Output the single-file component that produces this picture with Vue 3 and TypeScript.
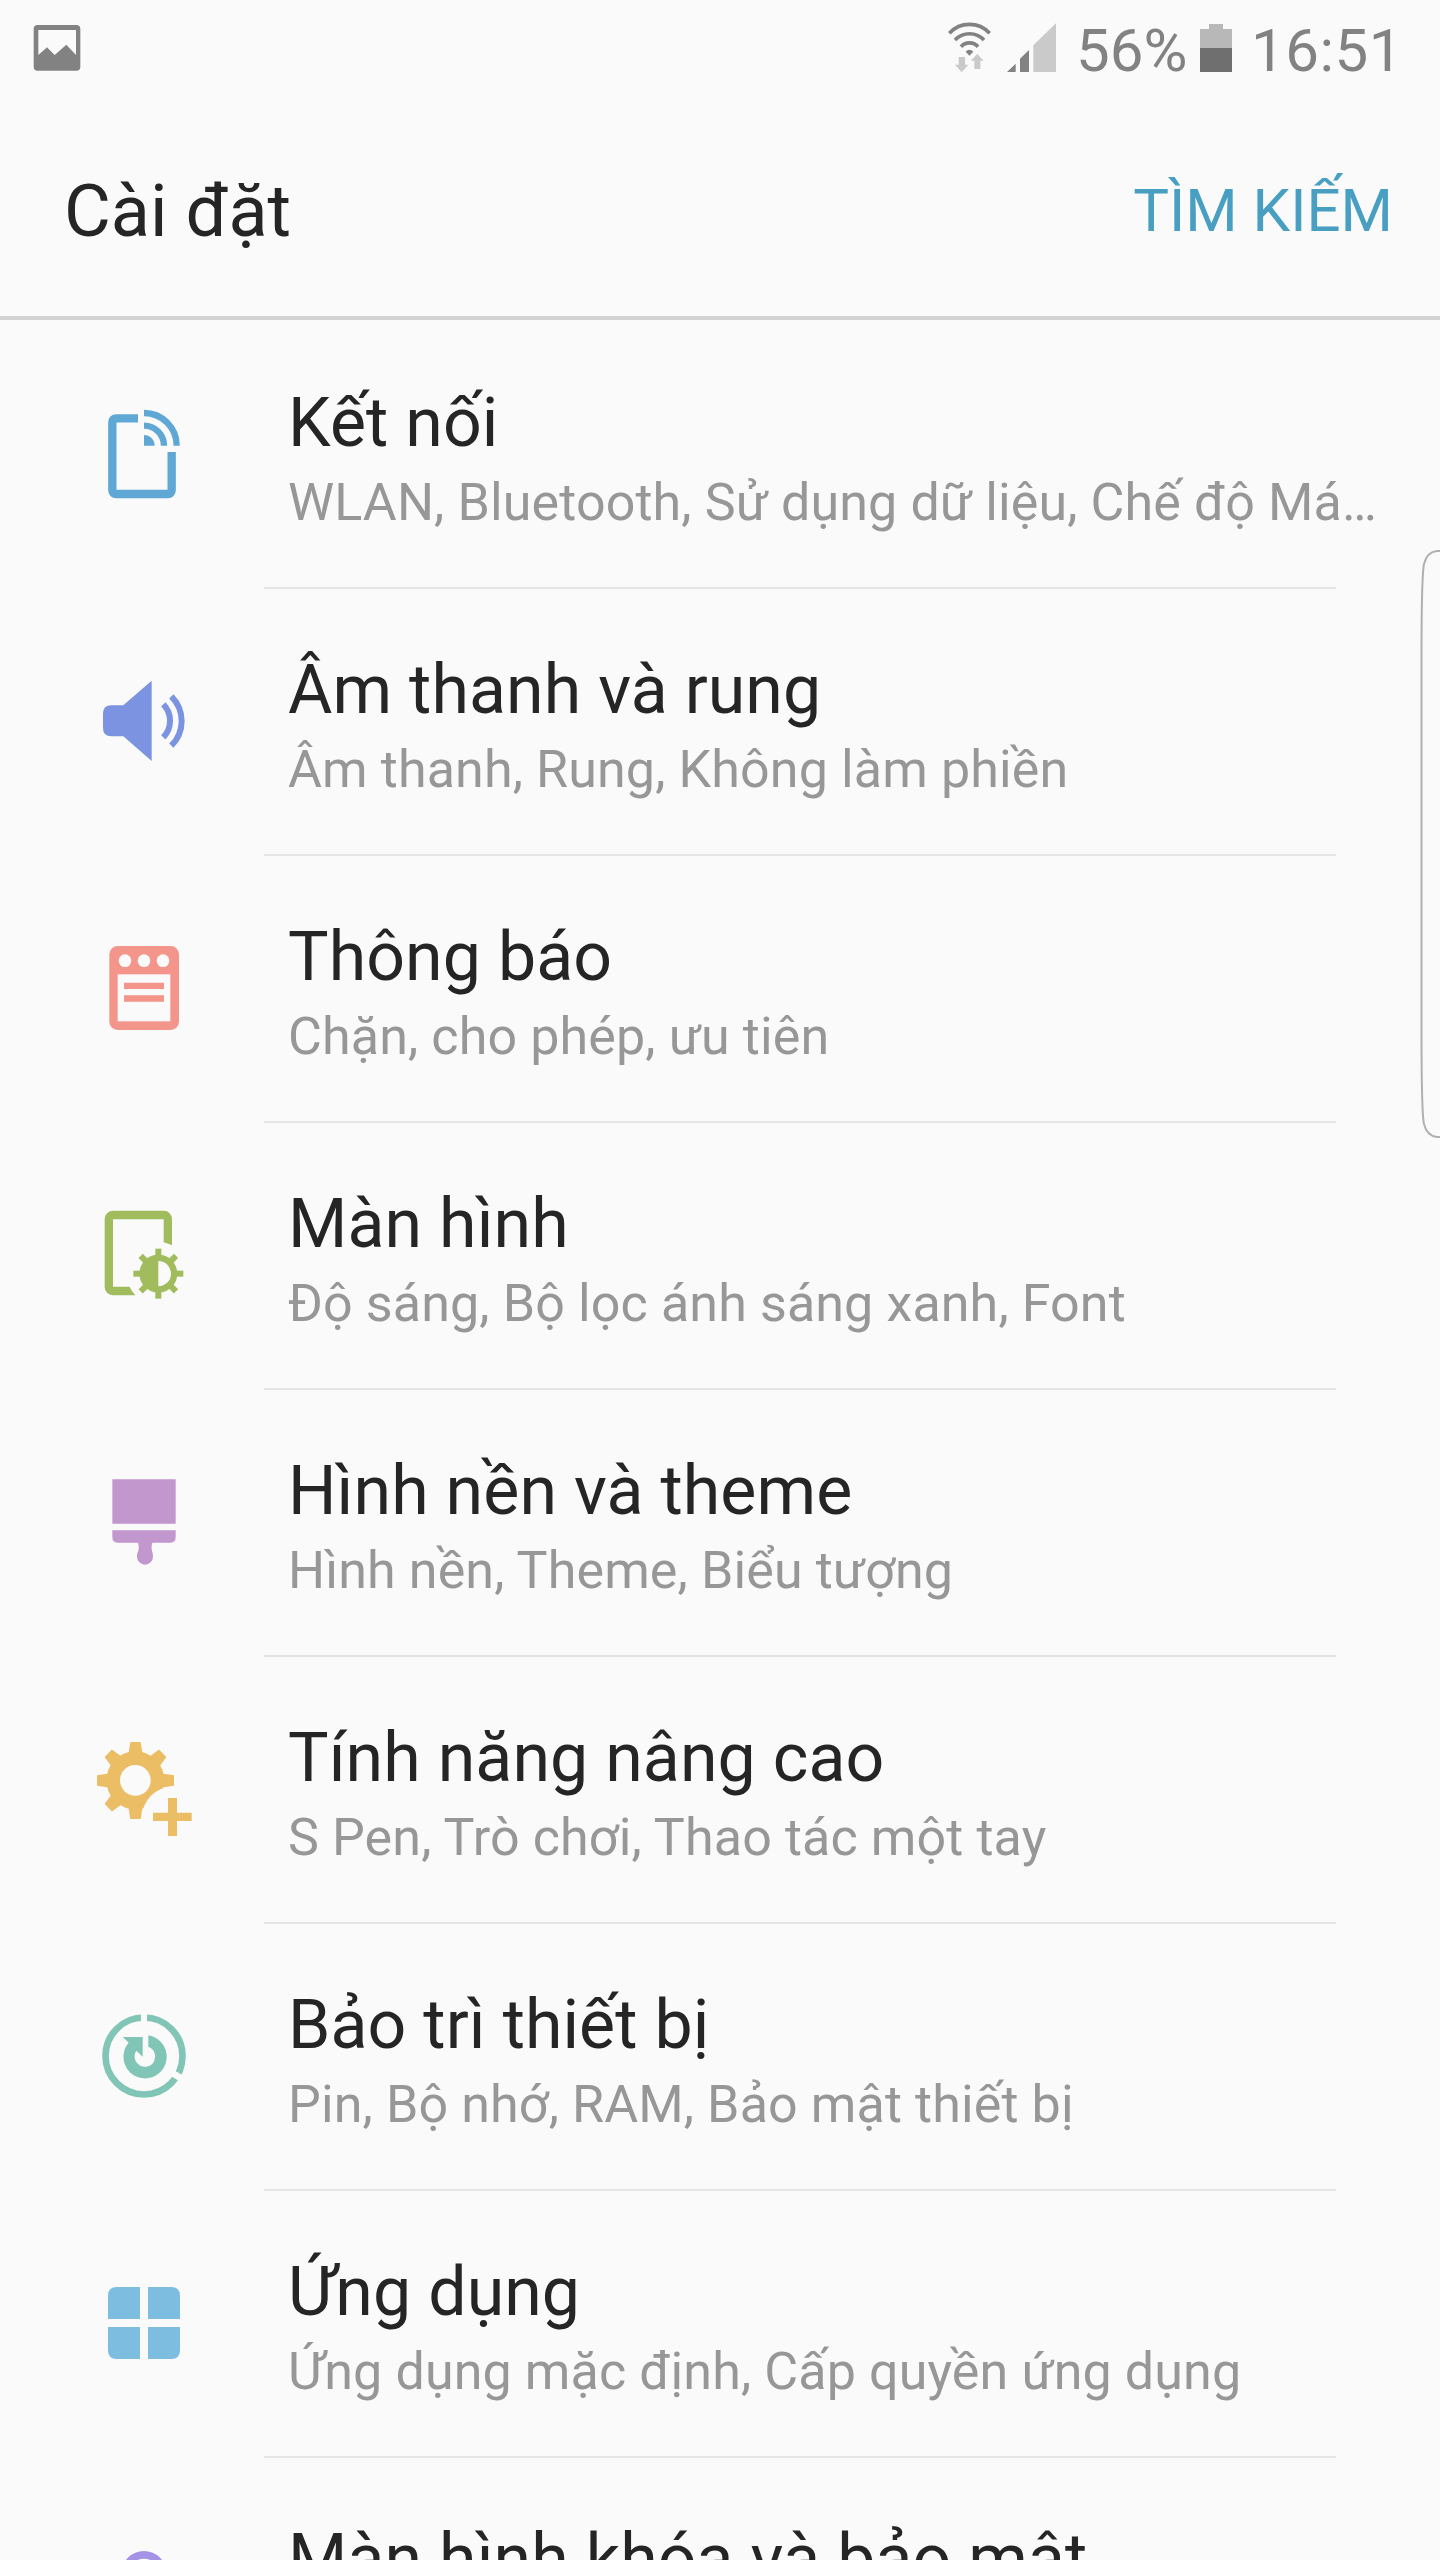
<script setup lang="ts">
interface Setting {
  id: string
  title: string
  summary: string
  color: string
  viewBox: string
}

const settings: Setting[] = [
  { id: 'connections', title: 'Kết nối', summary: 'WLAN, Bluetooth, Sử dụng dữ liệu, Chế độ Má…', color: '#5fa8d6', viewBox: '48 78 288 288' },
  { id: 'sound', title: 'Âm thanh và rung', summary: 'Âm thanh, Rung, Không làm phiền', color: '#7b93e1', viewBox: '48 69 288 288' },
  { id: 'notifications', title: 'Thông báo', summary: 'Chặn, cho phép, ưu tiên', color: '#f3958a', viewBox: '48 60 288 288' },
  { id: 'display', title: 'Màn hình', summary: 'Độ sáng, Bộ lọc ánh sáng xanh, Font', color: '#a0bc5c', viewBox: '48 81 288 288' },
  { id: 'themes', title: 'Hình nền và theme', summary: 'Hình nền, Theme, Biểu tượng', color: '#c197ce', viewBox: '48 72 288 288' },
  { id: 'advanced', title: 'Tính năng nâng cao', summary: 'S Pen, Trò chơi, Thao tác một tay', color: '#ebbd64', viewBox: '48 63 288 288' },
  { id: 'maintenance', title: 'Bảo trì thiết bị', summary: 'Pin, Bộ nhớ, RAM, Bảo mật thiết bị', color: '#80c5b6', viewBox: '48 54 288 288' },
  { id: 'apps', title: 'Ứng dụng', summary: 'Ứng dụng mặc định, Cấp quyền ứng dụng', color: '#7cbde0', viewBox: '48 75 288 288' },
  { id: 'security', title: 'Màn hình khóa và bảo mật', summary: '', color: '#a592e6', viewBox: '48 876 288 288' },
]

const octants = [0, 45, 90, 135, 180, 225, 270, 315]
const gearTeeth = [0, 45, 90, 180, 225, 270, 315]
</script>

<template>
  <div class="screen">
    <div class="status">
      <svg class="picture" viewBox="99 72 144 144">
        <path fill="#828282" fill-rule="evenodd" d="M113 75H229Q241 75 241 87V200Q241 212 229 212H113Q101 212 101 200V87Q101 75 113 75ZM115 90V165L141 142L164 165L199 134L228 165V90Z" />
      </svg>
      <svg class="wifi" viewBox="84 66 132 156">
        <g fill="none" stroke="#828282" stroke-width="11">
          <path d="M88 100A82 82 0 0 1 209 100" />
          <path d="M105 120A60 60 0 0 1 192 120" />
          <path d="M123 140A34 34 0 0 1 174 140" />
        </g>
        <path fill="#828282" d="M137 155Q148 143 160 155L148 167Z" />
        <path fill="#cacaca" d="M116 171H135V194H145L125 217L105 194H116ZM172 162L191 182H181V207H163V182H152Z" />
      </svg>
      <svg class="signal" viewBox="261 66 147 156">
        <path fill="#828282" d="M261 216L287 191V216ZM300 216V176L327 150V216Z" />
        <path fill="#cacaca" d="M340 216V136L408 70V216Z" />
      </svg>
      <span class="percent">56%</span>
      <svg class="battery" viewBox="840 66 96 156">
        <path fill="#b8b8b8" d="M840 87H867V72H909V87H936V144H840Z" />
        <path fill="#6f6f6f" d="M840 144H936V216H840Z" />
      </svg>
      <span class="clock">16:51</span>
    </div>

    <header class="header">
      <h1>Cài đặt</h1>
      <span class="search">TÌM KIẾM</span>
    </header>

    <main class="list">
      <section v-for="item in settings" :key="item.id" class="row">
        <svg class="icon" :viewBox="item.viewBox" :style="{ color: item.color }">
          <g v-if="item.id === 'connections'">
            <path class="line" stroke-width="25" d="M174 115H109Q97 115 97 127V330Q97 342 109 342H263Q275 342 275 330V216" />
            <path d="M192 165A32 32 0 0 1 224 197H192Z" />
            <path class="line" stroke-width="19" d="M192 137A60 60 0 0 1 252 197M192 99A98 98 0 0 1 290 197" />
          </g>
          <g v-else-if="item.id === 'sound'">
            <path d="M130 166L215 92V333L130 259H94Q69 259 69 234V191Q69 166 94 166Z" />
            <path class="line" stroke-width="18" d="M250 163A71 71 0 0 1 250 262M274 139A104 104 0 0 1 274 287" />
          </g>
          <g v-else-if="item.id === 'notifications'">
            <rect x="88" y="78" width="209" height="252" rx="25" />
            <g class="cut">
              <circle cx="135" cy="122" r="19" />
              <circle cx="192" cy="122" r="19" />
              <circle cx="249" cy="122" r="19" />
              <rect x="113" y="163" width="158" height="141" />
            </g>
            <path d="M132 188H252V207H132ZM132 226H252V245H132Z" />
          </g>
          <g v-else-if="item.id === 'display'">
            <rect class="line" stroke-width="25" x="86.500" y="105" width="177" height="228" rx="12" />
            <circle class="cut" cx="235" cy="281" r="95" />
            <rect v-for="a in octants" :key="a" x="226" y="206" width="18" height="30" :transform="`rotate(${a} 235 281)`" />
            <circle cx="235" cy="281" r="57" />
            <path class="cut" d="M235 243A38 38 0 0 1 235 319Z" />
          </g>
          <g v-else-if="item.id === 'themes'">
            <path d="M97 88H287V221H97ZM97 241H287V262Q287 278 271 278H217Q213 290 216 302C218 308 219 314 219 320A24 24 0 0 1 171 320C171 314 172 308 175 302Q178 290 174 278H113Q97 278 97 262Z" />
          </g>
          <g v-else-if="item.id === 'advanced'">
            <circle cx="166" cy="181" r="87" />
            <path v-for="a in gearTeeth" :key="a" d="M146 97L151 66H182L187 97V110H146Z" :transform="`rotate(${a} 166.500 181.500)`" />
            <circle class="cut" cx="166" cy="181" r="46" />
            <circle class="cut" cx="278" cy="292" r="92" />
            <path d="M264 234H291V278H335V303H291V348H264V303H219V278H264Z" />
          </g>
          <g v-else-if="item.id === 'maintenance'">
            <circle class="line" stroke-width="20" cx="192" cy="198" r="115.500" />
            <rect class="cut" x="183" y="64" width="18" height="40" />
            <path class="gap" d="M270 245L315 272" />
            <path d="M205 136A65 65 0 1 1 145 159L145 157L128 141H188V200L169 182A31 31 0 1 0 205 170Z" />
          </g>
          <g v-else-if="item.id === 'apps'">
            <path d="M180 111V207H84V137Q84 111 110 111ZM204 111H274Q300 111 300 137V207H204ZM84 231H180V327H110Q84 327 84 301ZM204 231H300V301Q300 327 274 327H204Z" />
          </g>
          <g v-else>
            <circle class="line" stroke-width="23" cx="192" cy="970.500" r="56" />
          </g>
        </svg>
        <div class="body">
          <div class="title">{{ item.title }}</div>
          <div class="summary">{{ item.summary }}</div>
        </div>
      </section>
    </main>

    <svg class="edge" viewBox="0 0 24 592">
      <path fill="none" stroke="#b0b0b0" stroke-width="2" d="M24 2H21Q11 3 8 15Q5.500 27 5.500 110V480Q5.500 565 8 575Q11 587 21 588H24" />
    </svg>
  </div>
</template>

<style>
body {
  margin: 0;
  background: #fafafa;
}
</style>

<style scoped>
.screen {
  position: relative;
  width: 1440px;
  height: 2560px;
  overflow: hidden;
  background: #fafafa;
  font-family: Roboto, "Noto Sans", sans-serif;
  color: #252525;
}

svg {
  display: block;
  flex: none;
}

.status {
  display: flex;
  height: 96px;
  box-sizing: border-box;
  padding: 22px 40px 0 33px;
  color: #828282;
  font-size: 60px;
  line-height: 58px;
  white-space: nowrap;
}

.picture {
  width: 48px;
  height: 48px;
  margin: 2px auto 0 0;
}

.wifi {
  width: 44px;
  height: 52px;
  margin-right: 15px;
}

.signal {
  width: 49px;
  height: 52px;
}

.percent {
  width: 124px;
  margin-left: 20px;
}

.battery {
  width: 32px;
  height: 52px;
  margin-right: 19px;
}

.clock {
  width: 149px;
  letter-spacing: 0.5px;
}

.header {
  display: flex;
  justify-content: space-between;
  height: 224px;
  box-sizing: border-box;
  padding: 0 47px 0 64px;
  border-bottom: 4px solid #d3d3d3;
}

h1 {
  margin: 71px 0 0;
  font-size: 72px;
  font-weight: 400;
  line-height: 90px;
}

.search {
  margin-top: 70px;
  color: #489fc1;
  font-size: 60px;
  line-height: 90px;
}

.list {
  padding-top: 2px;
}

.row {
  position: relative;
  display: flex;
  height: 267px;
}

.row::after {
  content: "";
  position: absolute;
  left: 264px;
  right: 104px;
  bottom: 0;
  height: 2px;
  background: #e5e5e5;
}

.icon {
  width: 96px;
  height: 96px;
  margin: 84px 96px 0;
  overflow: visible;
  fill: currentColor;
}

.line {
  fill: none;
  stroke: currentColor;
}

.cut {
  fill: #fafafa;
}

.gap {
  stroke: #fafafa;
  stroke-width: 20;
}

.body {
  width: 1100px;
  padding-top: 61px;
  white-space: nowrap;
}

.title {
  font-size: 68px;
  line-height: 80px;
  letter-spacing: 0.08px;
}

.summary {
  margin-top: 10px;
  color: #979797;
  font-size: 52px;
  line-height: 60px;
  letter-spacing: 0.12px;
}

.edge {
  position: absolute;
  top: 549px;
  right: 0;
  width: 24px;
  height: 592px;
}
</style>
